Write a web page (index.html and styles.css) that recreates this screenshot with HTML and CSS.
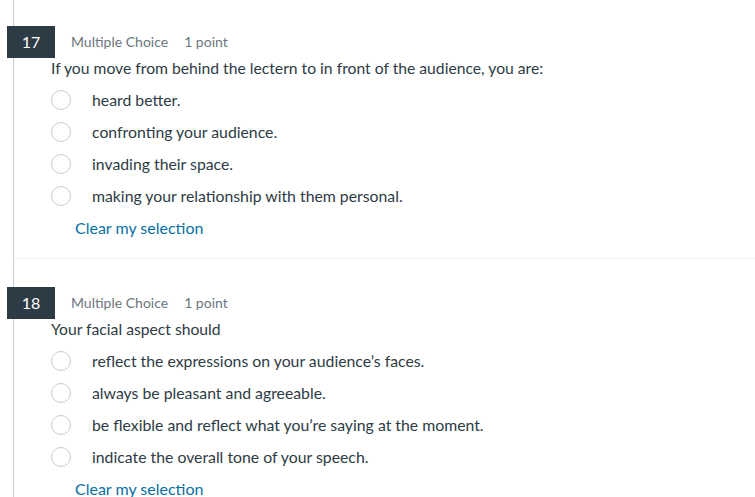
FILE: index.html
```html
<!DOCTYPE html>
<html>
<head>
<meta charset="utf-8">
<link rel="stylesheet" href="styles.css">
</head>
<body>
<div class="quiz">
  <div class="question">
    <div class="q-header">
      <span class="q-num">17</span>
      <span class="q-meta">Multiple Choice</span>
      <span class="q-meta">1 point</span>
    </div>
    <div class="q-body">
      <p class="q-text">If you move from behind the lectern to in front of the audience, you are:</p>
      <ul class="options">
        <li class="option"><span class="radio"></span><span>heard better.</span></li>
        <li class="option"><span class="radio"></span><span>confronting your audience.</span></li>
        <li class="option"><span class="radio"></span><span>invading their space.</span></li>
        <li class="option"><span class="radio"></span><span>making your relationship with them personal.</span></li>
      </ul>
      <a class="clear" href="#">Clear my selection</a>
    </div>
  </div>
  <div class="question">
    <div class="q-header">
      <span class="q-num">18</span>
      <span class="q-meta">Multiple Choice</span>
      <span class="q-meta">1 point</span>
    </div>
    <div class="q-body">
      <p class="q-text">Your facial aspect should</p>
      <ul class="options">
        <li class="option"><span class="radio"></span><span>reflect the expressions on your audience’s faces.</span></li>
        <li class="option"><span class="radio"></span><span>always be pleasant and agreeable.</span></li>
        <li class="option"><span class="radio"></span><span>be flexible and reflect what you’re saying at the moment.</span></li>
        <li class="option"><span class="radio"></span><span>indicate the overall tone of your speech.</span></li>
      </ul>
      <a class="clear" href="#">Clear my selection</a>
    </div>
  </div>
</div>
</body>
</html>
```
FILE: styles.css
```css
html, body {
  margin: 0;
  padding: 0;
  background: #ffffff;
  font-family: Lato, "Noto Sans", sans-serif;
  color: #2d3b45;
  overflow: hidden;
}

.quiz {
  margin-left: 13px;
  border-left: 1px solid #c7cdd1;
  min-height: 497px;
}

.question {
  padding-top: 28px;
  padding-bottom: 20px;
  border-bottom: 1px solid #eef0f1;
}

.question:first-child {
  padding-top: 26px;
}

.q-header {
  display: flex;
  align-items: center;
  gap: 16px;
  height: 32px;
  line-height: 18px;
}

.q-num {
  margin-left: -7px;
  width: 48px;
  height: 32px;
  background: #2d3b45;
  color: #ffffff;
  font-size: 16px;
  display: flex;
  align-items: center;
  justify-content: center;
}

.q-meta {
  font-size: 14px;
  color: #6b7780;
}

.q-body {
  padding-left: 37px;
}

.q-text {
  margin: 0 0 0 0;
  font-size: 15.7px;
  line-height: 20px;
}

.options {
  list-style: none;
  margin: 6px 0 0 0;
  padding: 0;
}

.option {
  display: flex;
  align-items: center;
  gap: 21px;
  height: 32px;
  font-size: 15.8px;
  line-height: 18px;
}

.radio {
  width: 18px;
  height: 18px;
  border: 1px solid #c7cdd1;
  border-radius: 50%;
  background: #ffffff;
  flex: none;
}

.clear {
  display: inline-block;
  margin: 6px 0 0 24px;
  font-size: 16px;
  line-height: 20px;
  color: #0770a3;
  text-decoration: none;
}
```
